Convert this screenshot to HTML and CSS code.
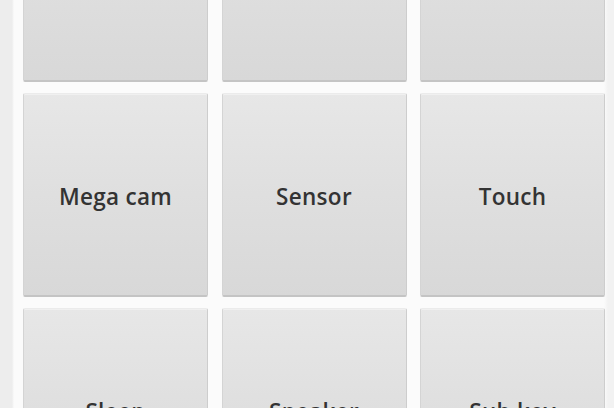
FILE: index.html
```html
<!DOCTYPE html>
<html>
<head>
<meta charset="utf-8">
<link rel="stylesheet" href="styles.css">
</head>
<body>
<div class="page">
  <div class="grid">
    <div class="tile"></div>
    <div class="tile"></div>
    <div class="tile"></div>
    <div class="tile"><span class="label">Mega cam</span></div>
    <div class="tile"><span class="label">Sensor</span></div>
    <div class="tile"><span class="label">Touch</span></div>
    <div class="tile"><span class="label">Sleep</span></div>
    <div class="tile"><span class="label">Speaker</span></div>
    <div class="tile"><span class="label">Sub key</span></div>
  </div>
</div>
</body>
</html>
```
FILE: styles.css
```css
html, body {
  margin: 0;
  padding: 0;
  width: 614px;
  height: 408px;
  overflow: hidden;
  background: #fbfbfb;
}
.page {
  height: 408px;
  background: linear-gradient(to right, #ededed 0, #ededed 12px, #fbfbfb 14px, #fbfbfb 604px, #f2f2f2 608px);
  overflow: hidden;
}
.grid {
  display: grid;
  grid-template-columns: 185px 185px 185px;
  grid-auto-rows: 204px;
  column-gap: 13.5px;
  row-gap: 11px;
  padding-left: 23px;
  margin-top: -122px;
}
.tile {
  box-sizing: border-box;
  display: flex;
  align-items: center;
  justify-content: center;
  padding-top: 4px;
  background: linear-gradient(to bottom, #e7e7e7 0%, #dfdfdf 50%, #d8d8d8 100%);
  border-left: 1px solid #d4d4d4;
  border-right: 1px solid #cdcdcd;
  border-top: 1px solid #ebebeb;
  border-bottom: 2px solid #c4c4c4;
  border-radius: 2px;
  box-shadow: inset 0 1px 0 #f0f0f0;
}
.label {
  font-family: "Open Sans", "DejaVu Sans", sans-serif;
  font-size: 22.5px;
  font-weight: 600;
  color: #333333;
  letter-spacing: 0.3px;
}
```
